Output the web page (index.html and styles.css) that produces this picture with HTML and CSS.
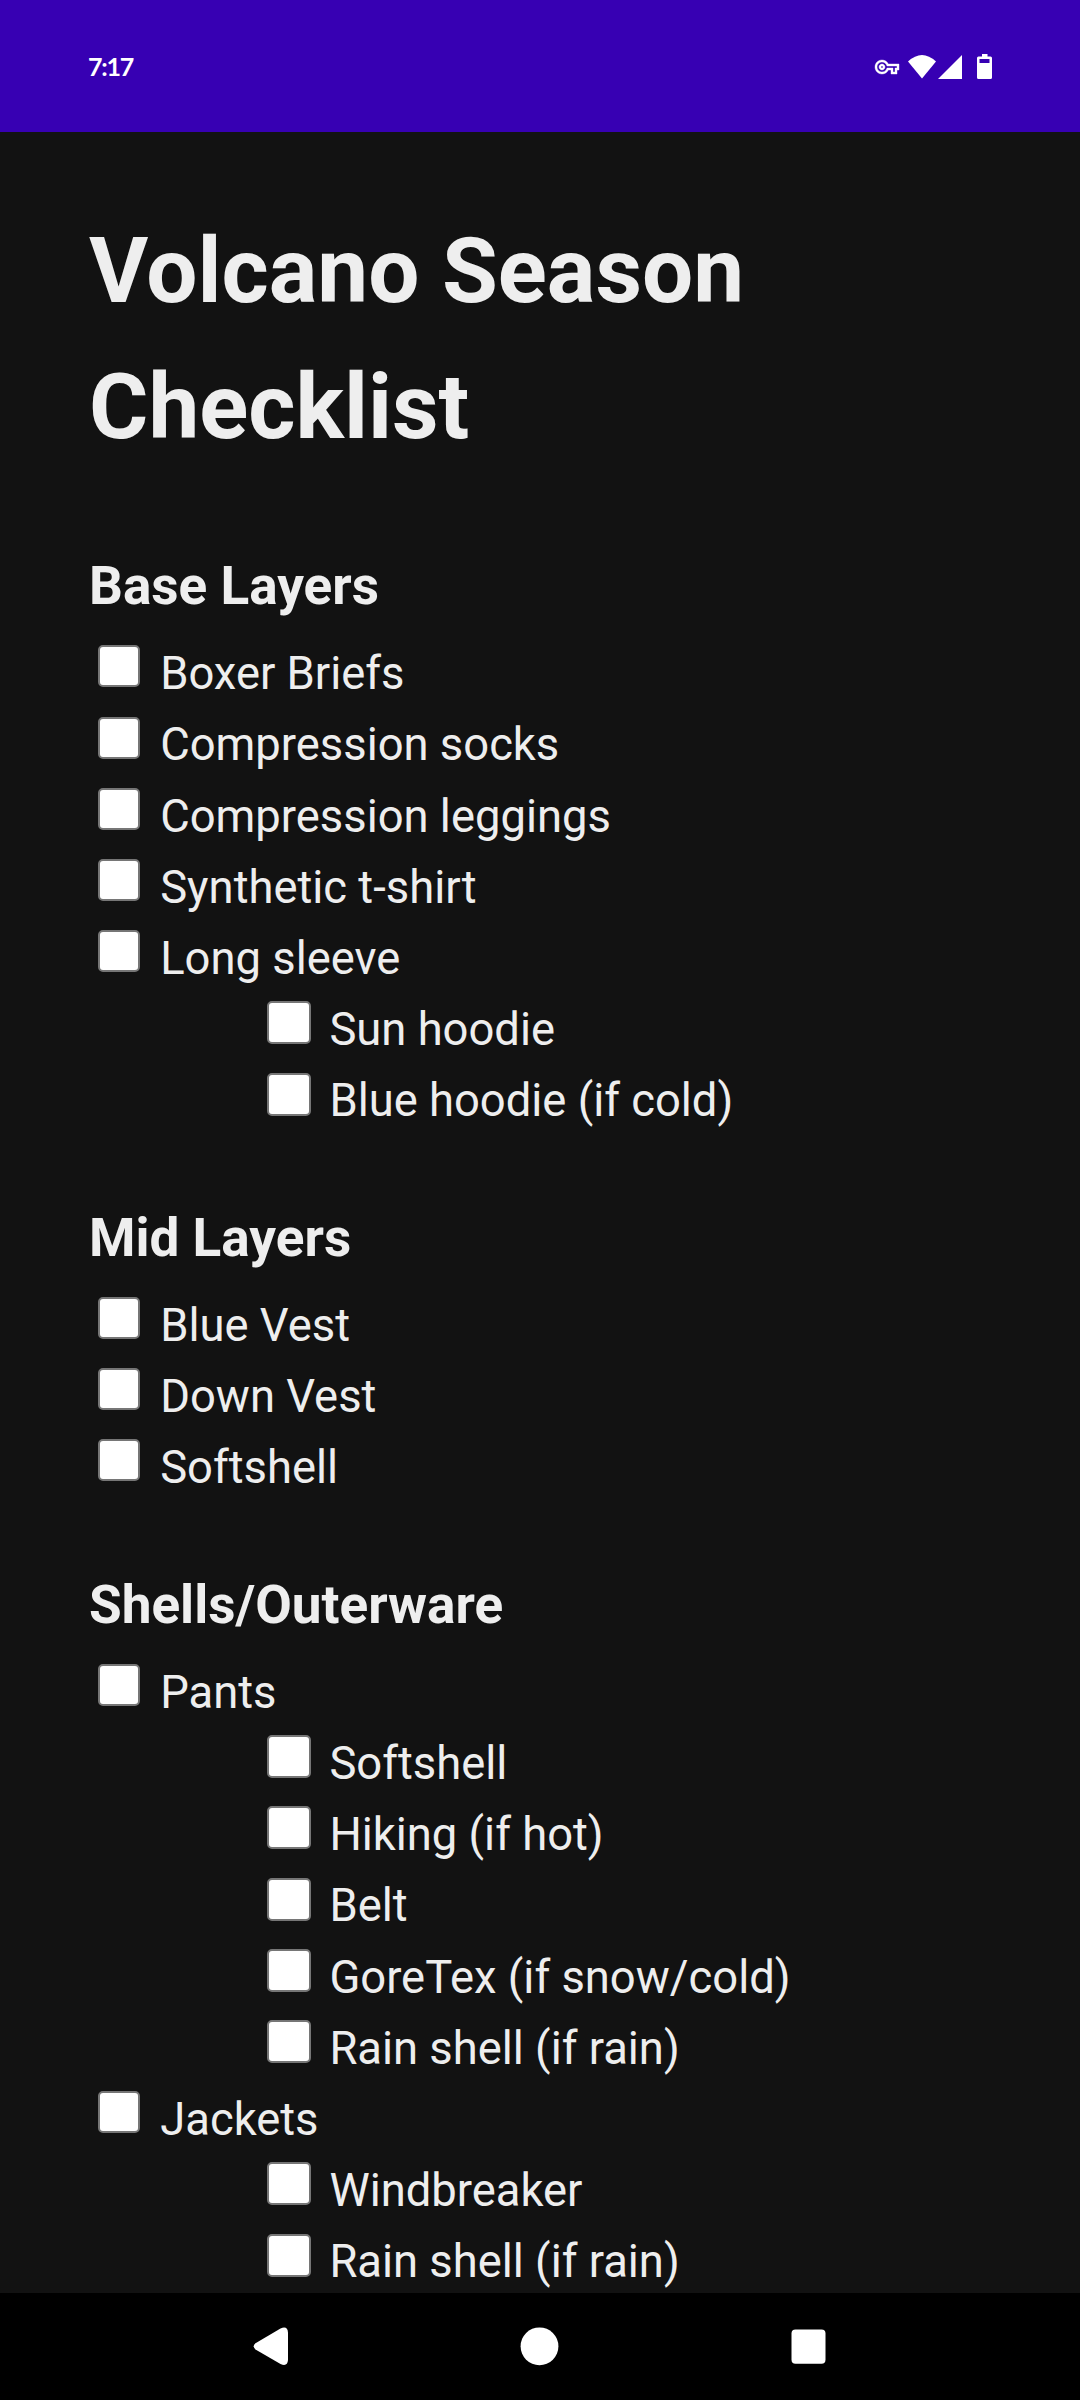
FILE: index.html
```html
<!DOCTYPE html>
<html lang="en">
<head>
<meta charset="utf-8">
<title>Volcano Season Checklist</title>
<link rel="stylesheet" href="styles.css">
</head>
<body>
<header class="status">
  <span class="clock">7:17</span>
  <svg class="status-icons" width="120" height="30" viewBox="873 51 120 30" fill="#fff">
    <path stroke="#fff" stroke-width=".4" transform="translate(875 55)" d="M22 19h-6v-4h-2.680c-1.140 2.420-3.600 4-6.320 4-3.860 0-7-3.140-7-7s3.140-7 7-7c2.720 0 5.170 1.580 6.320 4H24v6h-2v4zm-4-2h2v-4h2v-2H11.940l-.230-.670C11.010 8.340 9.110 7 7 7c-2.760 0-5 2.240-5 5s2.240 5 5 5c2.110 0 4.010-1.340 4.710-3.330l.230-.670H18v4zM7 15c-1.650 0-3-1.350-3-3s1.350-3 3-3 3 1.350 3 3-1.350 3-3 3zm0-4c-.550 0-1 .450-1 1s.450 1 1 1 1-.450 1-1-.450-1-1-1z"/>
    <path d="M908 61.500Q922 48.500 936 61.500L922 78.500z"/>
    <path d="M962 55v24h-24z"/>
    <path fill-rule="evenodd" d="M982 54h5.500v2.500h3q1.500 0 1.500 1.500v19.500q0 1.500-1.500 1.500h-12q-1.500 0-1.500-1.500V58q0-1.500 1.500-1.500h3.500zM979.500 59v4h10v-4z"/>
  </svg>
</header>
<main class="page">
  <h1>Volcano Season Checklist</h1>
  <section>
    <h2>Base Layers</h2>
    <label class="item"><i class="box"></i>Boxer Briefs</label>
    <label class="item"><i class="box"></i>Compression socks</label>
    <label class="item"><i class="box"></i>Compression leggings</label>
    <label class="item"><i class="box"></i>Synthetic t-shirt</label>
    <label class="item"><i class="box"></i>Long sleeve</label>
    <label class="item sub"><i class="box"></i>Sun hoodie</label>
    <label class="item sub"><i class="box"></i>Blue hoodie (if cold)</label>
  </section>
  <section>
    <h2>Mid Layers</h2>
    <label class="item"><i class="box"></i>Blue Vest</label>
    <label class="item"><i class="box"></i>Down Vest</label>
    <label class="item"><i class="box"></i>Softshell</label>
  </section>
  <section>
    <h2>Shells/Outerware</h2>
    <label class="item"><i class="box"></i>Pants</label>
    <label class="item sub"><i class="box"></i>Softshell</label>
    <label class="item sub"><i class="box"></i>Hiking (if hot)</label>
    <label class="item sub"><i class="box"></i>Belt</label>
    <label class="item sub"><i class="box"></i>GoreTex (if snow/cold)</label>
    <label class="item sub"><i class="box"></i>Rain shell (if rain)</label>
    <label class="item"><i class="box"></i>Jackets</label>
    <label class="item sub"><i class="box"></i>Windbreaker</label>
    <label class="item sub"><i class="box"></i>Rain shell (if rain)</label>
  </section>
</main>
<nav class="navbar">
  <svg width="1080" height="107" viewBox="0 2293 1080 107" fill="#fff">
    <path d="M255.500 2343.200L280.500 2328.500q7-3 7.500 4v27.500q-.500 7-7.500 4L255.500 2349.400q-3.600-3.100 0-6.200z"/>
    <circle cx="539.500" cy="2346.300" r="18.900"/>
    <rect x="791.500" y="2329.500" width="34" height="34.200" rx="4"/>
  </svg>
</nav>
</body>
</html>
```
FILE: styles.css
```css
* { box-sizing: border-box; }
body {
  margin: 0;
  height: 2400px;
  display: flex;
  flex-direction: column;
  overflow: hidden;
  background: #121212;
  color: #eee;
  font-family: Roboto, sans-serif;
}
.status {
  flex: none;
  height: 132px;
  padding: 0 87px 0 88px;
  display: flex;
  align-items: center;
  justify-content: space-between;
  background: #3700b3;
  color: #fff;
}
.clock {
  font: 700 25px/30px Lato, sans-serif;
  letter-spacing: -1.2px;
}
.page {
  flex: 1;
  min-height: 0;
  overflow: hidden;
  padding: 71px 89px 0;
}
h1 {
  margin: 0;
  width: 720px;
  font-size: 90.75px;
  line-height: 136px;
  font-weight: 700;
}
section { margin-bottom: 60.2px; }
h1 + section { margin-top: 72px; }
h2 {
  margin: 0 0 13.6px;
  font-size: 53.1px;
  line-height: 79.6px;
  font-weight: 700;
}
.item {
  display: flex;
  height: 71.2px;
  padding-left: 9px;
  gap: 20.2px;
  font-size: 45.375px;
  line-height: 68px;
}
.box {
  flex: none;
  width: 42px;
  height: 42px;
  margin-top: 5.2px;
  border: 2px solid #767676;
  border-radius: 5px;
  background: #fff;
}
.sub { padding-left: 178px; gap: 18.4px; }
.sub .box { width: 44px; height: 43px; }
.navbar { flex: none; height: 107px; background: #000; }
.navbar svg { display: block; }
```
